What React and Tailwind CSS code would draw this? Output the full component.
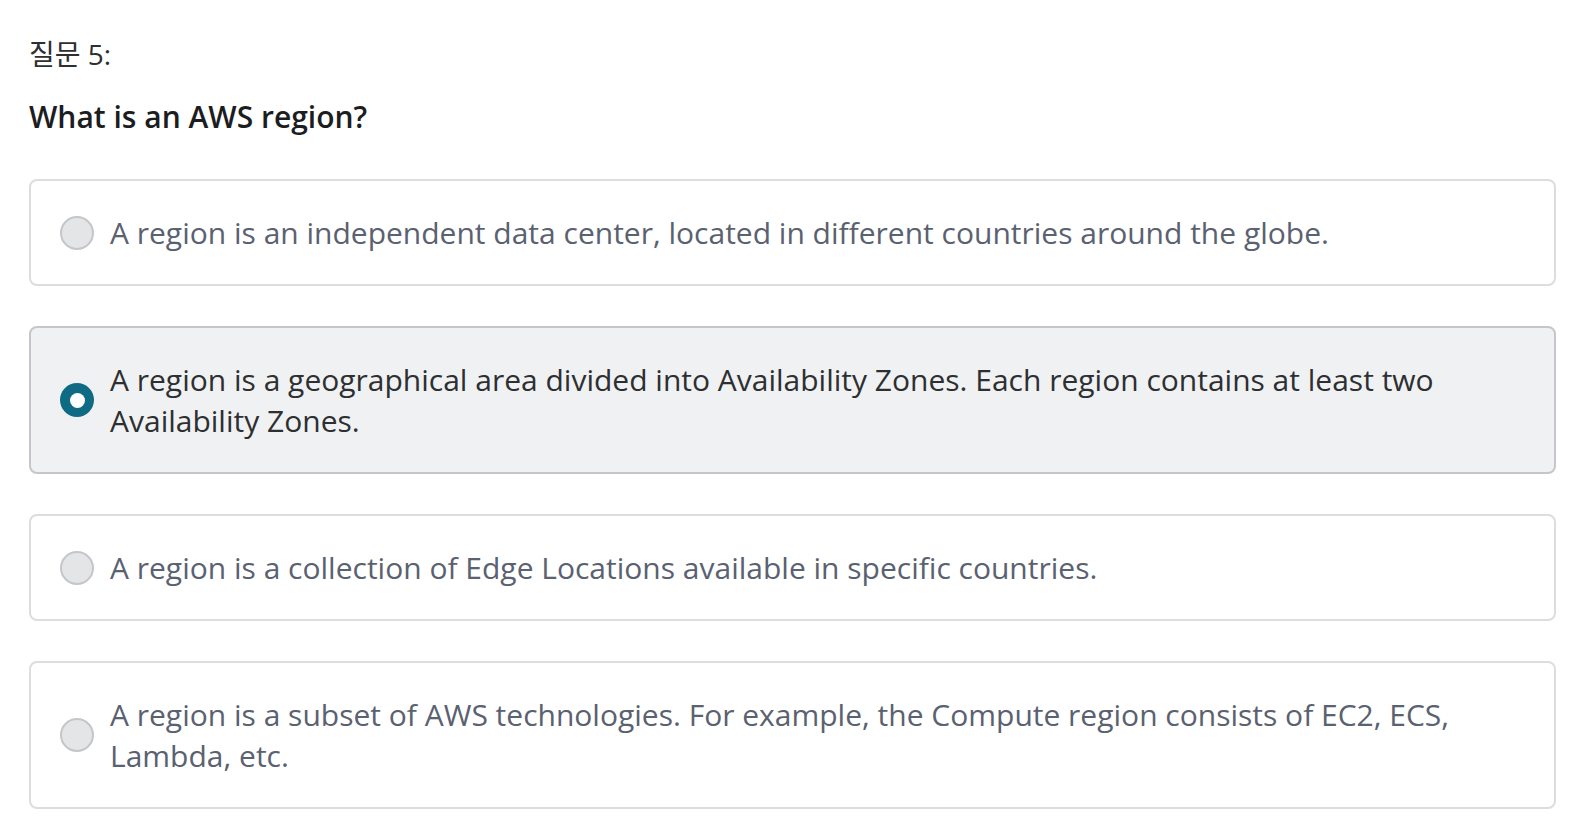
import React, { useState } from "react";

const options = [
  "A region is an independent data center, located in different countries around the globe.",
  "A region is a geographical area divided into Availability Zones. Each region contains at least two Availability Zones.",
  "A region is a collection of Edge Locations available in specific countries.",
  "A region is a subset of AWS technologies. For example, the Compute region consists of EC2, ECS, Lambda, etc.",
];

const Radio = ({ checked }) =>
  checked ? (
    <span className="shrink-0 w-[34px] h-[34px] rounded-full bg-[#0f6a84] flex items-center justify-center">
      <span className="w-[15px] h-[15px] rounded-full bg-white" />
    </span>
  ) : (
    <span className="shrink-0 w-[34px] h-[34px] rounded-full bg-[#e4e5e7] border-2 border-[#c4c6c9]" />
  );

export default function App() {
  const [selected, setSelected] = useState(1);

  return (
    <div className="bg-white min-h-screen pl-[29px] pr-[30px] pt-[34px] font-['Open_Sans','Noto_Sans_CJK_KR',sans-serif]">
      {/* question header */}
      <p className="text-[28px] leading-[41px] text-[#2d2f31]">질문 5:</p>
      <h2 className="mt-[21px] text-[30px] leading-[41px] font-semibold text-[#1c1d1f]">
        What is an AWS region?
      </h2>

      {/* answers */}
      <div className="mt-[42px] flex flex-col gap-[40px]">
        {options.map((text, i) => {
          const active = selected === i;
          return (
            <button
              key={i}
              onClick={() => setSelected(i)}
              className={
                active
                  ? "w-full text-left flex items-center gap-[16px] rounded-lg border-2 border-[#c4c6c9] bg-[#f0f1f3] pl-[29px] pr-[40px] py-[31px]"
                  : "w-full text-left flex items-center gap-[16px] rounded-lg border-2 border-[#dcdde0] bg-white pl-[29px] pr-[40px] py-[31px]"
              }
            >
              <Radio checked={active} />
              <span
                className={
                  active
                    ? "text-[30px] leading-[41px] text-[#2d2f31]"
                    : "text-[30px] leading-[41px] text-[#5a6170]"
                }
              >
                {text}
              </span>
            </button>
          );
        })}
      </div>
    </div>
  );
}
